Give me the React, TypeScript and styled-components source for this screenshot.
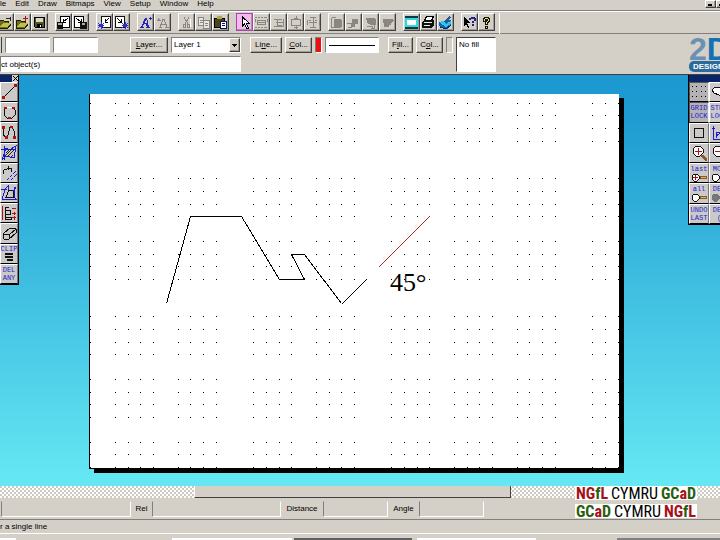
import React from "react";
import styled, { createGlobalStyle, css } from "styled-components";

const FACE = "#d4d0c8";
const SHADE = "#808080";
const DARK = "#404040";
const BLUE = "#1a1ad0";
const RED = "#b01010";

const GlobalStyle = createGlobalStyle`
  *, *::before, *::after { box-sizing: border-box; }
  html, body { margin: 0; height: 100%; overflow: hidden; }
  body, button, input, select { font-family: "Liberation Sans", Arial, sans-serif; font-size: 8px; line-height: 10px; color: #000; }
  button { cursor: default; }
`;

const raised = css`
  border: 1px solid;
  border-color: #fff ${DARK} ${DARK} #fff;
  box-shadow: inset -1px -1px 0 #a09c94;
`;

const sunken = css`
  border: 1px solid;
  border-color: ${SHADE} #fff #fff ${SHADE};
`;

const Window = styled.div`
  display: flex;
  flex-direction: column;
  height: 100vh;
  overflow: hidden;
  background: ${FACE};
`;

const MenuBar = styled.nav`
  display: flex;
  justify-content: space-between;
  height: 11px;
  border-bottom: 1px solid ${SHADE};
`;

const MenuList = styled.div`
  display: flex;
  gap: 9px;
`;

const MenuItem = styled.button`
  border: 0;
  padding: 0;
  background: none;
  height: 8px;
  line-height: 8px;
  white-space: nowrap;
`;

const WindowButtons = styled.div`
  display: flex;
  width: 15px;
  overflow: hidden;
`;

const WindowButton = styled.button`
  ${raised}
  flex: none;
  display: flex;
  padding: 3px 2px 0;
  width: 11px;
  height: 8px;
  background: ${FACE};
`;

const ToolBar = styled.div`
  display: flex;
  gap: 7px;
  height: 23px;
  padding-top: 1px;
  border-top: 1px solid #fff;
  border-bottom: 1px solid ${SHADE};
`;

const ToolGroup = styled.div<{ $clipped?: boolean }>`
  display: flex;
  ${(p) => p.$clipped && "width: 48px; justify-content: flex-end; overflow: hidden;"}
`;

const ToolButton = styled.button<{ $picked?: boolean }>`
  ${raised}
  flex: none;
  display: grid;
  place-items: center;
  width: 17px;
  height: 18px;
  padding: 0;
  background: ${(p) => (p.$picked ? "#f4b8f0" : FACE)};
  ${(p) => p.$picked && "border-color: #b040b0;"}
`;

const Divider = styled.div`
  width: 1px;
  height: 21px;
  margin-left: -3px;
  background: #fff;
`;

const OptionBar = styled.div`
  display: flex;
  justify-content: space-between;
  height: 41px;
  border-bottom: 1px solid ${DARK};
`;

const OptionRows = styled.div`
  display: flex;
  flex-direction: column;
  gap: 3px;
  width: 241px;
  padding-top: 3px;
`;

const OptionRow = styled.div`
  display: flex;
  gap: 3px;
  height: 16px;
`;

const Stub = styled.div`
  width: 2px;
  border-right: 1px solid ${DARK};
`;

const Field = styled.input<{ $wide?: boolean }>`
  ${sunken}
  width: ${(p) => (p.$wide ? "100%" : "45px")};
  height: 16px;
  padding: 0;
  border-radius: 0;
  background: #fff;
  outline: 0;
`;

const TextButton = styled.button<{ $width: number; $apart?: boolean }>`
  ${raised}
  width: ${(p) => p.$width}px;
  height: 16px;
  margin-left: ${(p) => (p.$apart ? 29 : 0)}px;
  padding: 0;
  background: ${FACE};
  white-space: nowrap;
`;

const LayerPick = styled.div`
  ${sunken}
  display: flex;
  flex: 1;
  background: #fff;
`;

const LayerSelect = styled.select`
  flex: 1;
  min-width: 0;
  appearance: none;
  border: 0;
  padding: 0 0 0 2px;
  background: none;
  outline: 0;
`;

const LayerArrow = styled.span`
  ${raised}
  display: grid;
  place-items: center;
  width: 11px;
  background: ${FACE};
  pointer-events: none;
`;

const StyleRow = styled.div`
  display: flex;
  gap: 3px;
  padding-top: 3px;
`;

const Swatch = styled.button<{ $color: string }>`
  ${sunken}
  width: 7px;
  height: 16px;
  padding: 0;
  background: ${(p) => p.$color};
`;

const LineSample = styled.button`
  ${sunken}
  display: grid;
  align-items: center;
  width: 54px;
  height: 16px;
  padding: 0 3px;
  background: #fff;

  &::before { content: ""; height: 1px; background: #000; }
`;

const FillSample = styled.button`
  ${sunken}
  border-top-color: ${DARK};
  border-left-color: ${DARK};
  width: 40px;
  height: 35px;
  padding: 2px 0 0 2px;
  display: flex;
  background: #fff;
`;

const StyleArea = styled.div`
  display: flex;
  flex: 1;
  gap: 9px;
  margin-left: 9px;
`;

const Brand = styled.div`
  width: 31px;
  padding-top: 1px;
  overflow: hidden;
`;

const BrandTop = styled.div`
  display: flex;
  height: 26px;
  font-size: 32px;
  line-height: 28px;
  font-weight: bold;
  color: #6b90b2;
`;

const BrandD = styled.span`
  color: #1470b4;
`;

const BrandPill = styled.div`
  width: 46px;
  height: 11px;
  padding-left: 4px;
  border-radius: 5px;
  line-height: 11px;
  font-weight: bold;
  color: #fff;
  background: #2b6a9c;
`;

const Workspace = styled.main`
  display: flex;
  flex: 1;
  align-items: flex-start;
  overflow: hidden;
  background: linear-gradient(#1c99d0 0%, #1e9bd1 10%, #66e8f4 100%);
`;

const Palette = styled.aside<{ $side: "left" | "right" }>`
  width: ${(p) => (p.$side === "left" ? 19 : 32)}px;
  overflow: hidden;
  background: #000;
  padding-bottom: 1px;
  ${(p) => (p.$side === "left" ? "padding-right: 1px;" : "padding-left: 1px;")}
`;

const PaletteTitle = styled.div`
  display: flex;
  justify-content: flex-end;
  height: 7px;
  background: #0a246a;
`;

const CloseButton = styled.button`
  display: grid;
  place-items: center;
  width: 6px;
  height: 7px;
  padding: 0;
  border: 0;
  background: ${FACE};
`;

const PaletteGrid = styled.div<{ $rows: number; $height: number; $cols: number }>`
  display: grid;
  grid-template-columns: ${(p) => (p.$cols === 1 ? "18px" : "20px 20px")};
  grid-template-rows: repeat(${(p) => p.$rows}, 1fr);
  height: ${(p) => p.$height}px;
`;

const PaletteButton = styled.button<{ $on?: boolean }>`
  display: flex;
  flex-direction: column;
  align-items: center;
  justify-content: center;
  min-width: 0;
  padding: 0;
  overflow: hidden;
  border: 1px solid;
  border-color: ${(p) => (p.$on ? "#555 #eee #000 #555" : "#fff #777 #000 #fff")};
  background: ${(p) => (p.$on ? "#b4b2b4" : "#cccac8")};
`;

const Tiny = styled.span`
  font: 7px/8px "Liberation Mono", monospace;
  color: ${BLUE};
`;

const Paper = styled.svg`
  flex: 1;
  min-width: 0;
  margin: 19px 64px 0 70px;
`;

const ScrollTrack = styled.div`
  display: flex;
  flex: none;
  height: 12px;
  background: repeating-conic-gradient(#fff 0 25%, #ccc9c2 0 50%) 0 0 / 4px 4px;
`;

const ScrollThumb = styled.div`
  width: 44%;
  margin-left: 27%;
  background: ${FACE};
  border-right: 1px solid ${DARK};
  border-bottom: 1px solid ${DARK};
  border-left: 1px solid #fff;
`;

const StatusArea = styled.footer`
  flex: none;
  display: flex;
  flex-direction: column;
  background: ${FACE};
`;

const StatusRow = styled.div`
  display: flex;
  align-items: flex-start;
  height: 22px;
  padding: 3px 0 0 1px;
  border-bottom: 1px solid ${SHADE};
`;

const StatusField = styled.output<{ $width: number }>`
  ${sunken}
  border-top-color: transparent;
  width: ${(p) => p.$width}px;
  height: 16px;
`;

const StatusLabel = styled.label<{ $width: number }>`
  width: ${(p) => p.$width}px;
  text-align: center;
  line-height: 16px;
`;

const Credits = styled.div`
  margin: -15px 23px 0 auto;
  width: 122px;
  display: flex;
  flex-direction: column;
  gap: 4px;
`;

const Credit = styled.div`
  display: flex;
  justify-content: space-between;
  height: 14px;
  padding: 0 1px;
  background: #fff;
  font: 16px/15px "Liberation Sans Narrow", "Roboto Condensed", "Open Sans Condensed", "Liberation Sans", sans-serif;
`;

const Ink = styled.b<{ $color: string }>`
  color: ${(p) => p.$color};
`;

const HintRow = styled.div`
  height: 14px;
  line-height: 13px;
  border-bottom: 1px solid #fff;
`;

const TaskStrip = styled.div`
  display: grid;
  grid-template-columns: 16fr 156fr 120fr 2fr 118fr 5fr 119fr 81fr 103fr;
  align-items: end;
  height: 6px;
`;

const TaskEdge = styled.i<{ $color: string }>`
  height: 2px;
  background: ${(p) => p.$color};
`;

type Shape = { d: string; c?: string; f?: string };

const Icon = ({ shapes, width = 15, height = width }: { shapes: Shape[]; width?: number; height?: number }) => (
  <svg width={width} height={height} viewBox={`0 0 ${width} ${height}`} shapeRendering="crispEdges" aria-hidden="true">
    {shapes.map((s, i) => (
      <path key={i} d={s.d} stroke={s.c ?? "none"} fill={s.f ?? "none"} />
    ))}
  </svg>
);

const G = "#8a8782";
const folder: Shape[] = [
  { d: "M1 5h4l1 1h4v3h3l-3 4H1z", f: "#6b6b18", c: "#222200" },
  { d: "M2 12l3-4h8l-3 4z", f: "#c0c048" },
];

const toolGroups: { name: string; shapes: Shape[]; picked?: boolean }[][] = [
  [
    { name: "Open", shapes: [...folder, { d: "M8 3.5h4M12.5 2v4", c: "#222" }] },
    { name: "Insert", shapes: [...folder, { d: "M8 3.5h5M10.5 1v5", c: RED }] },
    { name: "Save", shapes: [{ d: "M2 2h11v11H3l-1-1z", f: "#55551c" }, { d: "M2.5 2.5h10v10h-9l-1-1z", c: "#000" }, { d: "M4 3h7v4H4z", f: "#d8d8c8" }, { d: "M5 9h5v3H5z", f: "#000" }, { d: "M8 10h1v2H8z", f: "#fff" }] },
  ],
  [
    { name: "Load part", shapes: [{ d: "M4.5 1.5h9v11h-9z", c: "#000", f: "#fff" }, { d: "M1 7h6v7H1z", f: "#111" }, { d: "M2 8h4v2H2z", f: "#aaa" }, { d: "M12 3l-5 4M7 4v3h3", c: "#000" }] },
    { name: "Save part", shapes: [{ d: "M1.5 1.5h9v11h-9z", c: "#000", f: "#fff" }, { d: "M7 7h7v7H7z", f: "#111" }, { d: "M9 8h3v2H9z", f: "#aaa" }, { d: "M3 3l5 4M5 7h3V4", c: "#000" }] },
  ],
  [
    { name: "Zoom part", shapes: [{ d: "M4.5 1.5h9v11h-9z", c: "#111", f: "#fff" }, { d: "M1 8l6 5M1 13l6-5M1 10h6M4 7v7", c: "#3030c8" }, { d: "M12 3l-4 4M8 4v3h3", c: "#000" }] },
    { name: "Place part", shapes: [{ d: "M1.5 1.5h9v11h-9z", c: "#111", f: "#fff" }, { d: "M8 8l6 5M8 13l6-5M8 10h6M11 7v7", c: "#3030c8" }, { d: "M3 3l4 4M4 7h3V4", c: "#000" }] },
  ],
  [
    { name: "Text", shapes: [{ d: "M3 12L7 3h2l2 9H9L8 9H6l-1 3zM6.5 8h2V5z", f: "#2424b8" }, { d: "M2 12.5h4M8 12.5h4M12 2v3M10.5 3.5h3", c: "#2424b8" }] },
    { name: "Edit text", shapes: [{ d: "M5 12l3-8h1l3 8M6 9.5h5M4 12.5h3M10 12.5h4M3 3l2 3M2 5.5h4", c: G }] },
  ],
  [
    { name: "Cut", shapes: [{ d: "M5 2l4 7M10 2L6 9M4.5 9.5h2v3h-2zM8.500 9.500h2v3h-2z", c: G }, { d: "M11 4v8", c: "#fff" }] },
    { name: "Copy", shapes: [{ d: "M2.5 2.5h5v8h-5zM7.5 5.5h6v8h-6z", c: G, f: "#e8e6e0" }, { d: "M4 5h3M4 7.5h3M9 8.5h3M9 10.5h3", c: G }] },
    { name: "Paste", shapes: [{ d: "M1 3h11v10H1z", f: "#49461c" }, { d: "M1.5 3.5h10v9h-10z", c: "#000" }, { d: "M4 1h5v3H4z", f: "#aaa850" }, { d: "M7.5 6.5h6v7h-6z", c: "#101060", f: "#fff" }, { d: "M9 8.5h3M9 10.5h3", c: "#101060" }] },
  ],
  [
    { name: "Select", picked: true, shapes: [{ d: "M5.5 2v9l2-2 2 4h2l-2-4.5h3z", c: "#000", f: "#fff" }] },
    { name: "Select all", shapes: [{ d: "M1 2.5h2m1 0h2m1 0h2m1 0h3M1 12.5h2m1 0h2m1 0h2m1 0h3M3.5 5.5h8v4h-8zM3 7.5h9M1.5 4v3M13.5 4v3", c: G }] },
    { name: "Select right", shapes: [{ d: "M3 4.5h8M5 7.5h7M3 11.5h9M12.5 4v8M6 5v5h5", c: G }] },
    { name: "Select box", shapes: [{ d: "M3.5 4.5h9v6h-9zM8 1v3M6 3h4M8 10v4M6 12h4", c: G }] },
    { name: "Centre", shapes: [{ d: "M8 2v11M5 2.5h6M5 12.5h6M2 5v5M4 7.5h8M14 5v5M4 5.5h2M10 5.5h2", c: G }] },
  ],
  [
    { name: "Bring to front", shapes: [{ d: "M5 4h6l2 2v5l-2 2H5z", f: G }, { d: "M2.5 3v9h4M2.5 2.5h4", c: G }] },
    { name: "Send to back", shapes: [{ d: "M6 4h6v5H9v3H5V8h1z", f: G }, { d: "M1 8.5h4v4H2", c: G }] },
    { name: "Forward", shapes: [{ d: "M3 3h8l2 2v5H8l-3-1z", f: G }, { d: "M4 11h5v2M11 9v4H8", c: G }] },
    { name: "Backward", shapes: [{ d: "M3 4h9l2 1-3 3v2H9v2H4z", f: G }] },
  ],
  [
    { name: "Full screen", shapes: [{ d: "M1 1h13v13H1z", f: "#30d8e0" }, { d: "M1 1h13v2H1zM1 12h13v2H1z", f: "#0c3840" }, { d: "M3 5h9v5H3z", f: "#fff" }] },
    { name: "Print", shapes: [{ d: "M5.5 1.5h7l-2 4h-7z", f: "#fff", c: "#000" }, { d: "M1 7l3-2h9v5l-3 3H1z", f: "#111" }, { d: "M3 7.5h8M3 10.5h6M6 3.5h4", c: "#eee" }] },
    { name: "Plot", shapes: [{ d: "M1 7l4-1 8-1v5l-4 4-8-3z", f: "#1060c0" }, { d: "M1 7l4-1 3 3 5-3v3l-5 3z", f: "#30c8e0" }, { d: "M6 7l5-6 2 1-5 6z", f: "#205898" }, { d: "M2 12l6 2 5-4", c: "#082860" }] },
  ],
  [
    { name: "Context help", shapes: [{ d: "M2 2v9l2-2 2 4 1-1-2-4h3z", f: "#000" }, { d: "M7 3h2V2h4v1h1v3h-2v2h-2V6h2V4H9v1H7zM10 9h2v2h-2z", f: "#202080" }] },
    { name: "Help", shapes: [{ d: "M4.5 5V3.5h1v-1h4v1h1v3h-1v1h-1v2h-2v-3h1v-1h1v-1h-2V6h-2zM6.5 11.5h2v2h-2z", f: "#f0e868", c: "#111" }] },
  ],
];

const leftTools: { name: string; shapes?: Shape[]; text?: string[] }[] = [
  { name: "Line", shapes: [{ d: "M2 14L14 2", c: "#000" }, { d: "M1 12h3v3H1zM13 0h3v3h-3z", f: RED }] },
  { name: "Circle", shapes: [{ d: "M5 3h6l3 3v5l-3 3H6l-3-3V6z", c: "#111" }, { d: "M6 3h5", c: "#fff" }, { d: "M3 3h3v2H3zM11 3h3v2h-3zM7 13h3v2H7z", f: RED }] },
  { name: "Curve", shapes: [{ d: "M2 3v7l3 4 2-3 2-8h2l2 4 1 7", c: "#111" }, { d: "M1 2h3v3H1zM9 2h3v2H9zM4 12h3v3H4zM12 12h3v3h-3z", f: RED }] },
  { name: "Hatch", shapes: [{ d: "M1 15L5 3l3 2 7-4-2 12-8-2zM0 4h15M3 1v14", c: BLUE }, { d: "M4 11l8-8M6 12l7-7M5 8l4-4M9 13l3-3", c: "#222" }] },
  { name: "Fillet", shapes: [{ d: "M2 9V6l2-2M6 3h3l2 2M7 1v4M3 4.5h3M10 3v4", c: "#111" }, { d: "M6 15l2-2m1-1l2-2m1-1l3-3M10 15l2-2m1-1l3-3", c: BLUE }] },
  { name: "Shape", shapes: [{ d: "M1 15L4 4l3-3v4h6l2-3M0 4h6M13 2v10l2 2H2", c: BLUE }, { d: "M5 12l3-7 4 1 1 6z", c: "#111" }] },
  { name: "Dimension", shapes: [{ d: "M1.5 1v14", c: RED }, { d: "M4 2.5h4M4.5 2v12M4 5.500h5v4H4M4 12.5h6v2H4", c: "#111" }, { d: "M11 3.5h4M11 8.5h4M13.5 7v3M11 12.5h4M13.5 11v4", c: RED }] },
  { name: "Erase", shapes: [{ d: "M2 9l7-6 6 1v4l-7 6H3zM2 9l6 1 7-6M8 10v4", c: "#111" }] },
  { name: "Clip", text: ["CLIP"], shapes: [{ d: "M4 0h8v2H4zM4 3h8v2H4zM6 6h6v2H6z", f: "#111" }] },
  { name: "Delete any", text: ["DEL", "ANY"] },
];

const glass = (inner: Shape[]): Shape[] => [
  { d: "M5 1h4l3 3v4l-3 3H5L2 8V4z", c: "#111", f: "#fff" },
  { d: "M10 10h2l4 4v2h-2l-4-4z", f: "#8a5a20" },
  ...inner,
];
const flatGlass = (fill: string, cross?: boolean): Shape[] => [
  { d: "M3 1h3l2 2v3L6 8H3L1 6V3z", c: fill === "#fff" ? "#111" : fill, f: fill },
  { d: "M9 3h7v3H9z", f: "#8a5a20" },
  { d: "M10 4h5v1h-5z", f: "#e0b070" },
  ...(cross ? [{ d: "M2 4.5h5M4.5 2v5", c: RED }] : []),
];

const rightTools: { name: string; shapes?: Shape[]; text?: string[]; on?: boolean }[] = [
  { name: "Grid dots", on: true, shapes: [{ d: [2, 7, 12].map((y) => [1, 5, 10, 14].map((x) => `M${x} ${y}h1v1h-1z`).join("")).join(""), f: "#000" }] },
  { name: "Step", shapes: [{ d: "M1 6l3-3h9v8H8L3 9z", c: "#111", f: "#fff" }] },
  { name: "Grid lock", on: true, text: ["GRID", "LOCK"] },
  { name: "Step lock", text: ["STEP", "LOCK"] },
  { name: "Rectangle", shapes: [{ d: "M3.5 3.5h9v9h-9z", c: "#111" }] },
  { name: "Axes", shapes: [{ d: "M2.5 1v13.5H16M1 3h3M5 13V7h6v6M5 11l6-4", c: BLUE }] },
  { name: "Zoom in", shapes: glass([{ d: "M4 6.5h7M7.5 3v7", c: RED }]) },
  { name: "Zoom out", shapes: glass([{ d: "M4 6.5h7", c: RED }]) },
  { name: "Zoom last", text: ["last"], shapes: flatGlass("#fff", true) },
  { name: "Zoom more", text: ["MOD"], shapes: flatGlass("#fff") },
  { name: "Zoom all", text: ["all"], shapes: flatGlass("#fff") },
  { name: "Zoom selected", text: ["DEL"], shapes: flatGlass("#777") },
  { name: "Undo last", text: ["UNDO", "LAST"] },
  { name: "Delete", text: ["DEL", "("] },
];

const PaletteFace = ({ text, shapes }: { text?: string[]; shapes?: Shape[] }) => (
  <>
    {text?.map((word) => <Tiny key={word}>{word}</Tiny>)}
    {shapes && <Icon width={16} height={text ? 9 : 16} shapes={shapes} />}
  </>
);

const dotX = [1, 26, 39, 51, 64, 89, 101, 114, 127, 164, 177, 190, 202, 227, 240, 252, 265, 302, 315, 328, 340, 365, 378, 390, 403, 428, 440, 453, 466, 503, 516, 529];
const dotY = [9, 21, 34, 47, 84, 97, 110, 122, 147, 160, 172, 185, 222, 235, 248, 260, 285, 298, 310, 323, 348, 360, 373];
const dot = (x: number, y: number) => `M${x} ${y}h1v1h-1z`;
const gridPath = dotY.map((y) => dotX.map((x) => dot(x, y)).join("")).join("");
const risingDots = (x: number, y: number, count: number) =>
  Array.from({ length: count }, (_, i) => dot(x + i, y - i)).join("");

const Drawing = () => (
  <Paper viewBox="0 0 535 379" role="img" aria-label="Drawing sheet">
    <g shapeRendering="crispEdges">
      <rect x="5" y="4" width="530" height="375" fill="#000" />
      <rect x="0" y="0" width="530" height="375" fill="#000" />
      <rect x="1" y="0" width="529" height="374" fill="#fff" />
      <path d={gridPath} fill="#000" />
      <path d="M77.5 209.5L101.5 122.5H152.5L190.5 185.5H215.500L202.500 160.500H215.500L252.500 209.500" fill="none" stroke="#000" />
      <path d={risingDots(253, 209, 25)} fill="#000" />
      <path d={risingDots(290, 172, 51)} fill="#b02828" />
    </g>
    <text x="301" y="197" fontFamily="Liberation Serif, serif" fontSize="26">45°</text>
  </Paper>
);

const menus = ["le", "Edit", "Draw", "Bitmaps", "View", "Setup", "Window", "Help"];
const taskEdges = ["#fff", FACE, "#fff", FACE, "#606060", FACE, "#fff", FACE, SHADE];

const Ngfl = () => <span><Ink $color="#a81018">NG</Ink><Ink $color="#286010">f</Ink><Ink $color="#a81018">L</Ink></span>;
const Gcad = () => <span><Ink $color="#286010">GC</Ink><Ink $color="#a81018">a</Ink><Ink $color="#286010">D</Ink></span>;

export default function App() {
  return (
    <Window>
      <GlobalStyle />
      <MenuBar>
        <MenuList>
          {menus.map((m) => <MenuItem key={m}>{m}</MenuItem>)}
        </MenuList>
        <WindowButtons>
          <WindowButton aria-label="Minimise"><Icon width={5} shapes={[{ d: "M0 0h4v2H0z", f: "#000" }]} /></WindowButton>
          <WindowButton aria-label="Restore"><Icon width={5} shapes={[{ d: "M0 0h5v2H0z", f: "#000" }]} /></WindowButton>
        </WindowButtons>
      </MenuBar>

      <ToolBar role="toolbar">
        {toolGroups.map((group, i) => (
          <ToolGroup key={i} $clipped={i === 0}>
            {group.map((t) => (
              <ToolButton key={t.name} aria-label={t.name} $picked={t.picked}>
                <Icon shapes={t.shapes} />
              </ToolButton>
            ))}
          </ToolGroup>
        ))}
        <Divider />
      </ToolBar>

      <OptionBar>
        <OptionRows>
          <OptionRow>
            <Stub />
            <Field aria-label="X" />
            <Field aria-label="Y" />
            <TextButton $width={38} $apart><u>L</u>ayer...</TextButton>
            <LayerPick>
              <LayerSelect aria-label="Layer"><option>Layer 1</option></LayerSelect>
              <LayerArrow><Icon width={5} shapes={[{ d: "M0 1h5v1H4v1H3v1H2V3H1V2H0z", f: "#000" }]} /></LayerArrow>
            </LayerPick>
          </OptionRow>
          <Field $wide aria-label="Prompt" defaultValue="ct object(s)" />
        </OptionRows>
        <StyleArea>
          <StyleRow>
            <TextButton $width={32}>Li<u>n</u>e...</TextButton>
            <TextButton $width={27}><u>C</u>ol...</TextButton>
            <Swatch $color="#e81010" aria-label="Line colour" />
            <LineSample aria-label="Line style" />
          </StyleRow>
          <StyleRow>
            <TextButton $width={25}>F<u>i</u>ll...</TextButton>
            <TextButton $width={27}>C<u>o</u>l...</TextButton>
            <Swatch $color={FACE} aria-label="Fill colour" />
            <FillSample>No fill</FillSample>
          </StyleRow>
        </StyleArea>
        <Brand>
          <BrandTop>2<BrandD>D</BrandD></BrandTop>
          <BrandPill>DESIGN</BrandPill>
        </Brand>
      </OptionBar>

      <Workspace>
        <Palette $side="left">
          <PaletteTitle>
            <CloseButton aria-label="Close"><Icon width={5} shapes={[{ d: "M0 0l5 5M5 0L0 5", c: "#000" }]} /></CloseButton>
          </PaletteTitle>
          <PaletteGrid $rows={10} $height={202} $cols={1}>
            {leftTools.map((t) => (
              <PaletteButton key={t.name} aria-label={t.name}>
                <PaletteFace text={t.text} shapes={t.shapes} />
              </PaletteButton>
            ))}
          </PaletteGrid>
        </Palette>
        <Drawing />
        <Palette $side="right">
          <PaletteTitle />
          <PaletteGrid $rows={7} $height={142} $cols={2}>
            {rightTools.map((t) => (
              <PaletteButton key={t.name} aria-label={t.name} $on={t.on}>
                <PaletteFace text={t.text} shapes={t.shapes} />
              </PaletteButton>
            ))}
          </PaletteGrid>
        </Palette>
      </Workspace>

      <ScrollTrack><ScrollThumb /></ScrollTrack>

      <StatusArea>
        <StatusRow>
          <StatusField $width={130} aria-label="Absolute" />
          <StatusLabel $width={21} htmlFor="rel">Rel</StatusLabel>
          <StatusField $width={129} id="rel" />
          <StatusLabel $width={42} htmlFor="dist">Distance</StatusLabel>
          <StatusField $width={65} id="dist" />
          <StatusLabel $width={31} htmlFor="angle">Angle</StatusLabel>
          <StatusField $width={65} id="angle" />
          <Credits>
            <Credit><Ngfl /><span>CYMRU</span><Gcad /></Credit>
            <Credit><Gcad /><span>CYMRU</span><Ngfl /></Credit>
          </Credits>
        </StatusRow>
        <HintRow>r a single line</HintRow>
        <TaskStrip>
          {taskEdges.map((c, i) => <TaskEdge key={i} $color={c} />)}
        </TaskStrip>
      </StatusArea>
    </Window>
  );
}
